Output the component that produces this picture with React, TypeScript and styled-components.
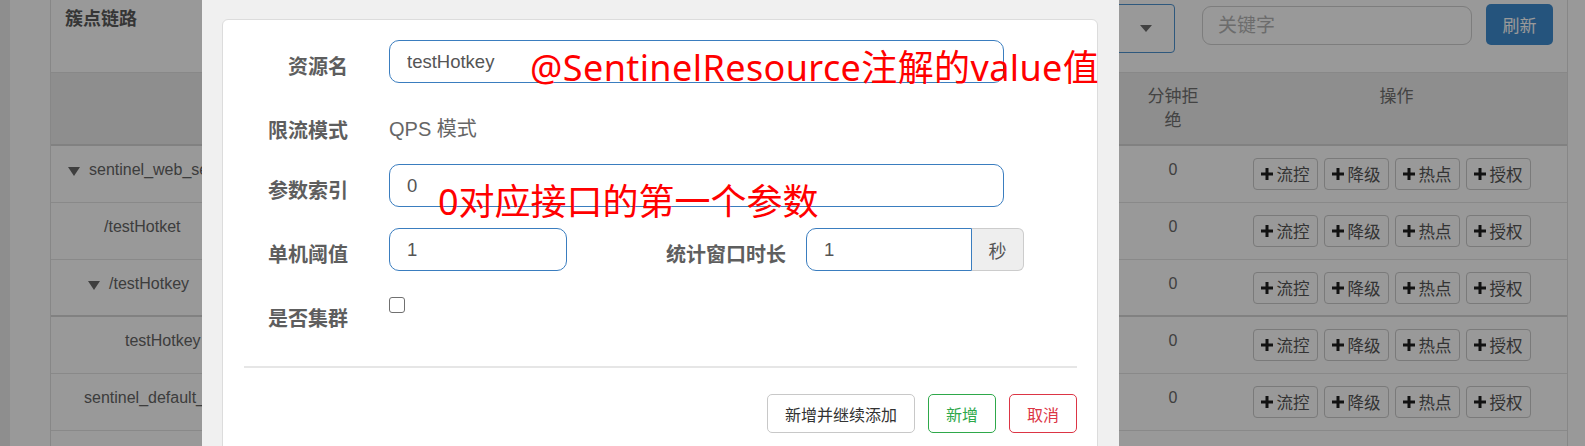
import React from 'react';
import styled, { createGlobalStyle, css } from 'styled-components';

const GlobalStyle = createGlobalStyle`
  html, body { margin: 0; padding: 0; width: 1585px; height: 446px; overflow: hidden; background: #fff; }
  body { font-family: "Liberation Sans", Arial, "Noto Sans CJK SC", sans-serif; }
  * { box-sizing: border-box; }
`;

const CJK = `"Liberation Sans", Arial, "Noto Sans CJK SC", sans-serif`;

/* ---------- background page ---------- */
const Page = styled.div`
  display: flex;
  width: 1585px;
  height: 446px;
`;
const SideEdge = styled.div`
  flex: none;
  width: 10px;
  background: #ededed;
`;
const Content = styled.main`
  flex: 1;
  padding: 0 17px 0 40px;
`;
const Panel = styled.section`
  height: 100%;
  border-left: 1px solid #e1e1e1;
  border-right: 1px solid #e1e1e1;
  background: #fff;
`;
const Heading = styled.header`
  display: flex;
  align-items: flex-start;
  height: 73px;
  padding: 4px 14px 0 14px;
  border-bottom: 1px solid #e3e3e3;
`;
const Title = styled.h3`
  margin: 3px 0 0;
  font: 700 18px/24px ${CJK};
  color: #5a5a5a;
`;
const Controls = styled.div`
  margin-left: auto;
  display: flex;
  align-items: flex-start;
`;
const SelectBox = styled.div`
  position: relative;
  width: 175px;
  height: 49px;
  border: 1px solid #4e93d0;
  border-radius: 4px;
  margin-right: 27px;
  &::after {
    content: '';
    position: absolute;
    right: 22px;
    top: 20px;
    border-left: 6px solid transparent;
    border-right: 6px solid transparent;
    border-top: 7px solid #6e6e6e;
  }
`;
const Keyword = styled.input`
  width: 270px;
  height: 39px;
  margin-top: 2px;
  margin-right: 14px;
  border: 1px solid #d0d0d0;
  border-radius: 9px;
  padding: 0 15px;
  font: 19px ${CJK};
  color: #555;
  outline: none;
  &::placeholder { color: #b5b5b5; }
`;
const RefreshButton = styled.button`
  width: 67px;
  height: 41px;
  border: none;
  border-radius: 5px;
  background: #3f8dd0;
  color: #fff;
  font: 17px ${CJK};
`;

const TableRow = styled.div<{ $head?: boolean; $strong?: boolean }>`
  display: grid;
  grid-template-columns: 1fr 106px 341px;
  height: ${(p) => (p.$head ? 73 : 57)}px;
  border-bottom: ${(p) => (p.$head || p.$strong ? '2px solid #d8d8d8' : '1px solid #e5e5e5')};
  background: ${(p) => (p.$head ? '#ededed' : '#fff')};
`;
const Cell = styled.div<{ $head?: boolean }>`
  padding: 12px 8px;
  font: ${(p) => (p.$head ? '17px' : '16px')}/24px ${CJK};
  color: ${(p) => (p.$head ? '#707070' : '#6a6a6a')};
  text-align: center;
`;
const NarrowText = styled.span`
  display: inline-block;
  width: 3.2em;
`;
const TreeCell = styled.div<{ $indent: number }>`
  display: flex;
  align-items: center;
  height: 48px;
  padding: 0 0 0 ${(p) => p.$indent}px;
  font: 16px/24px ${CJK};
  color: #666;
  white-space: nowrap;
  overflow: hidden;
`;
const Arrow = styled.svg`
  flex: none;
  width: 12px;
  height: 9px;
  margin-right: 9px;
  margin-top: 2px;
  fill: #6a6a6a;
`;
const OpsCell = styled.div`
  display: flex;
  justify-content: center;
  gap: 6px;
  padding: 12px 10px 0 0;
`;
const OpButton = styled.button`
  display: inline-flex;
  align-items: center;
  gap: 4px;
  height: 32px;
  padding: 0 7px;
  border: 1px solid #cbcbcb;
  border-radius: 4px;
  background: #fff;
  font: 16.5px ${CJK};
  color: #555;
`;
const PlusIcon = styled.svg`
  width: 12px;
  height: 12px;
  fill: #1e1e1e;
`;

/* ---------- modal ---------- */
const Overlay = styled.div`
  position: fixed;
  inset: 0;
  background: rgba(0, 0, 0, 0.4);
  z-index: 10;
`;
const Dialog = styled.div`
  position: fixed;
  left: 202px;
  top: 0;
  bottom: 0;
  width: 917px;
  padding: 19px 21px 0 20px;
  background: #f0f0f0;
  z-index: 11;
`;
const Card = styled.div`
  position: relative;
  height: 500px;
  background: #fff;
  border: 1px solid #dcdcdc;
  border-radius: 6px;
  padding: 20px 20px 0 21px;
`;
const FormBody = styled.div`
  display: flex;
  flex-direction: column;
  gap: 21px;
  padding-bottom: 35px;
`;
const FormRow = styled.div`
  display: flex;
  align-items: flex-start;
`;
const Label = styled.label<{ $width: number; $gap: number }>`
  flex: none;
  width: ${(p) => p.$width}px;
  margin-right: ${(p) => p.$gap}px;
  padding-top: 12px;
  text-align: right;
  font: 700 20px/27px "Noto Sans CJK SC", sans-serif;
  color: #5e5e5e;
`;
const TextInput = styled.input<{ $width: number; $joined?: boolean }>`
  flex: none;
  width: ${(p) => p.$width}px;
  height: 43px;
  padding: 0 17px;
  border: 1px solid #3a7dbf;
  border-radius: ${(p) => (p.$joined ? '10px 0 0 10px' : '10px')};
  font: 18.5px "Liberation Sans", Arial, sans-serif;
  color: #555;
  outline: none;
  background: #fff;
`;
const StaticText = styled.div`
  padding-top: 12px;
  font: 20px/27px ${CJK};
  color: #666;
`;
const InputGroup = styled.div`
  display: flex;
`;
const Addon = styled.span`
  width: 52px;
  height: 43px;
  display: flex;
  align-items: center;
  justify-content: center;
  background: #eee;
  border: 1px solid #ccc;
  border-left: none;
  border-radius: 0 6px 6px 0;
  font: 18px ${CJK};
  color: #555;
`;
const Check = styled.input`
  appearance: none;
  width: 16px;
  height: 16px;
  margin: 5px 0 0;
  border: 1px solid #707070;
  border-radius: 3px;
  background: #fff;
`;
const Footer = styled.div`
  display: flex;
  justify-content: flex-end;
  gap: 13px;
  padding-top: 26px;
  border-top: 2px solid #e6e6e6;
`;
const variants = {
  default: css`border-color: #c8c8c8; color: #333;`,
  success: css`border-color: #2ea84a; color: #2ea84a;`,
  danger: css`border-color: #dc3545; color: #dc3545;`,
};
const FooterButton = styled.button<{ $variant: keyof typeof variants }>`
  height: 39px;
  padding: 0 17px;
  border: 1px solid;
  border-radius: 5px;
  background: #fff;
  font: 16px "Noto Sans CJK SC", sans-serif;
  ${(p) => variants[p.$variant]}
`;
const Annotation = styled.div<{ $left: number; $top: number; $spacing?: number }>`
  position: absolute;
  left: ${(p) => p.$left}px;
  top: ${(p) => p.$top}px;
  font: 36px/1 "Noto Sans", "Noto Sans CJK SC", sans-serif;
  letter-spacing: ${(p) => p.$spacing ?? 0}px;
  color: #ff0000;
  white-space: nowrap;
  pointer-events: none;
`;

const treeRows = [
  { name: 'sentinel_web_servlet_context', indent: 17, expandable: true },
  { name: '/testHotket', indent: 53 },
  { name: '/testHotkey', indent: 37, expandable: true, strong: true },
  { name: 'testHotkey', indent: 74 },
  { name: 'sentinel_default_context', indent: 33 },
];
const ops = ['流控', '降级', '热点', '授权'];

const Plus = () => (
  <PlusIcon viewBox="0 0 12 12">
    <path d="M4.5 0h3v4.5H12v3H7.5V12h-3V7.5H0v-3h4.5z" />
  </PlusIcon>
);

export default function App() {
  return (
    <>
      <GlobalStyle />
      <Page>
        <SideEdge />
        <Content>
          <Panel>
            <Heading>
              <Title>簇点链路</Title>
              <Controls>
                <SelectBox />
                <Keyword placeholder="关键字" />
                <RefreshButton>刷新</RefreshButton>
              </Controls>
            </Heading>
            <TableRow $head>
              <Cell $head />
              <Cell $head>
                <NarrowText>分钟拒绝</NarrowText>
              </Cell>
              <Cell $head>操作</Cell>
            </TableRow>
            {treeRows.map((r) => (
              <TableRow key={r.name} $strong={r.strong}>
                <TreeCell $indent={r.indent}>
                  {r.expandable && (
                    <Arrow viewBox="0 0 12 9">
                      <polygon points="0,0 12,0 6,9" />
                    </Arrow>
                  )}
                  {r.name}
                </TreeCell>
                <Cell>0</Cell>
                <OpsCell>
                  {ops.map((o) => (
                    <OpButton key={o}>
                      <Plus />
                      {o}
                    </OpButton>
                  ))}
                </OpsCell>
              </TableRow>
            ))}
          </Panel>
        </Content>
      </Page>

      <Overlay />
      <Dialog>
        <Card>
          <FormBody>
            <FormRow>
              <Label $width={104} $gap={41}>资源名</Label>
              <TextInput $width={615} defaultValue="testHotkey" />
            </FormRow>
            <FormRow>
              <Label $width={104} $gap={41}>限流模式</Label>
              <StaticText>QPS 模式</StaticText>
            </FormRow>
            <FormRow>
              <Label $width={104} $gap={41}>参数索引</Label>
              <TextInput $width={615} defaultValue="0" />
            </FormRow>
            <FormRow>
              <Label $width={104} $gap={41}>单机阈值</Label>
              <TextInput $width={178} defaultValue="1" />
              <Label $width={219} $gap={20}>统计窗口时长</Label>
              <InputGroup>
                <TextInput $width={166} $joined defaultValue="1" />
                <Addon>秒</Addon>
              </InputGroup>
            </FormRow>
            <FormRow>
              <Label $width={104} $gap={41}>是否集群</Label>
              <Check type="checkbox" />
            </FormRow>
          </FormBody>
          <Footer>
            <FooterButton $variant="default">新增并继续添加</FooterButton>
            <FooterButton $variant="success">新增</FooterButton>
            <FooterButton $variant="danger">取消</FooterButton>
          </Footer>
          <Annotation $left={307} $top={30} $spacing={0.4}>@SentinelResource注解的value值</Annotation>
          <Annotation $left={215} $top={164}>0对应接口的第一个参数</Annotation>
        </Card>
      </Dialog>
    </>
  );
}
